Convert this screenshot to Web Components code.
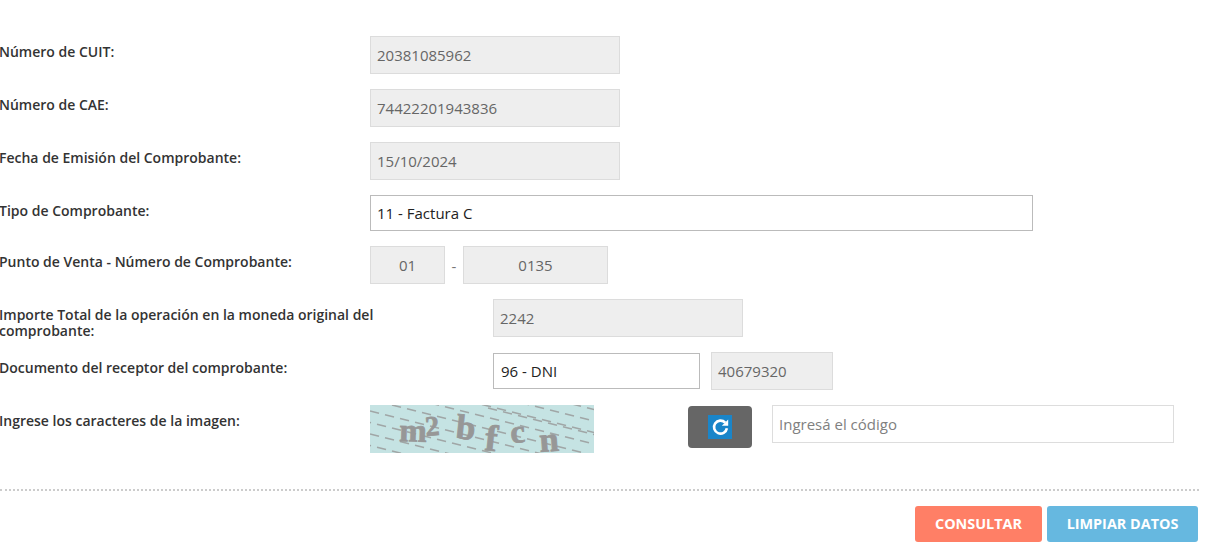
<!DOCTYPE html>
<html lang="es">
<head>
<meta charset="utf-8">
<title>Consulta de comprobante</title>
<style>
    html, body { margin: 0; background: #fff; }
    body { font-family: "Open Sans", "Liberation Sans", sans-serif; overflow: hidden; }
</style>
</head>
<body>
<cae-form>
    <form-row label="Número de CUIT:">
        <text-box width="250" readonly>20381085962</text-box>
    </form-row>
    <form-row label="Número de CAE:">
        <text-box width="250" readonly>74422201943836</text-box>
    </form-row>
    <form-row label="Fecha de Emisión del Comprobante:">
        <text-box width="250" readonly>15/10/2024</text-box>
    </form-row>
    <form-row label="Tipo de Comprobante:">
        <select-box width="663">11 - Factura C</select-box>
    </form-row>
    <form-row label="Punto de Venta - Número de Comprobante:">
        <text-box width="75" readonly center>01</text-box>
        <span style="width:18px;height:38px;text-align:center;font-size:15px;color:#777;line-height:41px;">-</span>
        <text-box width="145" readonly center>0135</text-box>
    </form-row>
    <form-row label="Importe Total de la operación en la moneda original del comprobante:" column="493">
        <text-box width="250" readonly>2242</text-box>
    </form-row>
    <form-row label="Documento del receptor del comprobante:" column="493">
        <select-box width="207" offset="1" style="padding-left:7px">96 - DNI</select-box>
        <text-box width="122" readonly style="margin-left:11px">40679320</text-box>
    </form-row>
    <form-row label="Ingrese los caracteres de la imagen:" gap="36">
        <captcha-image></captcha-image>
        <refresh-button></refresh-button>
        <text-box width="402" placeholder style="margin-left:20px">Ingresá el código</text-box>
    </form-row>
    <form-actions>
        <action-button width="127" color="#ff7f66">CONSULTAR</action-button>
        <action-button width="151" color="#66b8e0">LIMPIAR DATOS</action-button>
    </form-actions>
</cae-form>

<script>
class CaeForm extends HTMLElement {
    constructor() {
        super();
        this.attachShadow({ mode: 'open' }).innerHTML = `
            <style>
                :host { display: block; width: 1209px; height: 545px; padding-top: 36px; box-sizing: border-box; }
            </style>
            <slot></slot>
        `;
    }
}

class FormRow extends HTMLElement {
    constructor() {
        super();
        const column = this.getAttribute('column') || 370;
        const gap = this.getAttribute('gap') || 15;
        this.attachShadow({ mode: 'open' }).innerHTML = `
            <style>
                :host { display: grid; grid-template-columns: ${column}px 1fr; align-items: start; margin-bottom: ${gap}px; }
                /* the two line label may run past the 38px of its row */
                .label {
                    width: 385px; padding-top: 8px; margin: 0 0 -8px -1px; box-sizing: border-box;
                    font-size: 14px; font-weight: 600; line-height: 16px; color: #333;
                }
                .control { display: flex; align-items: flex-start; }
            </style>
            <div class="label"></div>
            <div class="control"><slot></slot></div>
        `;
        this.shadowRoot.querySelector('.label').innerText = this.getAttribute('label');
    }
}

class TextBox extends HTMLElement {
    constructor() {
        super();
        const readonly = this.hasAttribute('readonly');
        const placeholder = this.hasAttribute('placeholder');
        this.attachShadow({ mode: 'open' }).innerHTML = `
            <style>
                :host {
                    display: block; flex: none; box-sizing: border-box; height: 38px;
                    width: ${this.getAttribute('width')}px; padding: 0 6px;
                    border: 1px solid ${readonly ? '#dcdcdc' : '#ddd'};
                    background: ${readonly ? '#eee' : '#fff'};
                    color: ${placeholder ? '#808080' : '#666'};
                    font-size: 15px; line-height: 36px;
                    text-align: ${this.hasAttribute('center') ? 'center' : 'left'};
                }
            </style>
            <slot></slot>
        `;
    }
}

class SelectBox extends HTMLElement {
    constructor() {
        super();
        const offset = this.getAttribute('offset') || 0;
        this.attachShadow({ mode: 'open' }).innerHTML = `
            <style>
                :host {
                    display: block; flex: none; box-sizing: border-box; height: 36px;
                    width: ${this.getAttribute('width')}px; padding: 0 6px; margin-top: ${offset}px;
                    border: 1px solid #bbb; background: #fff; color: #222;
                    font-size: 15px; line-height: 35px;
                }
            </style>
            <slot></slot>
        `;
    }
}

class CaptchaImage extends HTMLElement {
    constructor() {
        super();
        // rows of slanted dashes behind the letters
        let dashes = '';
        const addRow = (y0, shift) => {
            for (let x = shift - 30; x < 224; x += 15) {
                const y = y0 + x * 0.25;
                dashes += `<line x1="${x}" y1="${y}" x2="${x + 9}" y2="${y + 2.2}"/>`;
            }
        };
        for (let row = -6; row < 6; row++) {
            addRow(row * 11.5 + 6, row % 2 ? 7 : 0);
        }
        // the doubled rows of the top right corner
        for (let x = 118; x < 224; x += 15) {
            const y = (x - 118) * 0.25 + 3;
            dashes += `<line x1="${x}" y1="${y}" x2="${x + 9}" y2="${y + 2.2}"/>`;
        }
        const letters = [
            ['m', 29, 36, 2, 33],
            ['2', 56, 31, -5, 28],
            ['b', 85, 33, 6, 35],
            ['f', 114, 45, 6, 37],
            ['c', 141, 38, -4, 33],
            ['n', 170, 47, -4, 35]
        ];
        const glyphs = letters.map(([c, x, y, r, s]) =>
            `<text x="${x}" y="${y}" font-size="${s}" transform="rotate(${r} ${x} ${y})">${c}</text>`).join('');
        this.attachShadow({ mode: 'open' }).innerHTML = `
            <style>
                :host { display: block; flex: none; width: 224px; height: 48px; margin-right: 94px; background: #c5e3e3; }
                svg { display: block; overflow: visible; }
                line { stroke: #a0a6a6; stroke-width: 1.5; }
                text { font-family: "Liberation Serif", serif; font-weight: 700; fill: #979797; stroke: #979797; stroke-width: 0.8; }
            </style>
            <svg width="224" height="48" viewBox="0 0 224 48">
                <clipPath id="frame"><rect width="224" height="48"/></clipPath>
                <g clip-path="url(#frame)">${dashes}</g>
                ${glyphs}
            </svg>
        `;
    }
}

class RefreshButton extends HTMLElement {
    constructor() {
        super();
        this.attachShadow({ mode: 'open' }).innerHTML = `
            <style>
                :host {
                    display: flex; flex: none; align-items: center; justify-content: center;
                    width: 64px; height: 42px; margin-top: 1px; border-radius: 4px; background: #666;
                }
                .icon { display: block; width: 24px; height: 24px; background: #1a85c9; }
            </style>
            <svg class="icon" viewBox="0 0 24 24">
                <path d="M17.2 7.6A6.5 6.5 0 1 0 18.9 13.2" fill="none" stroke="#fff" stroke-width="2.6"/>
                <path d="M20.2 4.4V10.8H13.8Z" fill="#fff"/>
            </svg>
        `;
    }
}

class FormActions extends HTMLElement {
    constructor() {
        super();
        this.attachShadow({ mode: 'open' }).innerHTML = `
            <style>
                :host {
                    display: flex; justify-content: flex-end; gap: 5px;
                    width: 1199px; box-sizing: border-box;
                    padding: 15px 1px 0 0; border-top: 2px dotted #ccc;
                }
            </style>
            <slot></slot>
        `;
    }
}

class ActionButton extends HTMLElement {
    constructor() {
        super();
        this.attachShadow({ mode: 'open' }).innerHTML = `
            <style>
                :host {
                    display: block; box-sizing: border-box; height: 36px; text-align: center;
                    width: ${this.getAttribute('width')}px;
                    border-radius: 3px; background: ${this.getAttribute('color')}; color: #fff;
                    font-size: 14.4px; font-weight: 700; line-height: 36px;
                }
            </style>
            <slot></slot>
        `;
    }
}

customElements.define('cae-form', CaeForm);
customElements.define('form-row', FormRow);
customElements.define('text-box', TextBox);
customElements.define('select-box', SelectBox);
customElements.define('captcha-image', CaptchaImage);
customElements.define('refresh-button', RefreshButton);
customElements.define('form-actions', FormActions);
customElements.define('action-button', ActionButton);
</script>
</body>
</html>
